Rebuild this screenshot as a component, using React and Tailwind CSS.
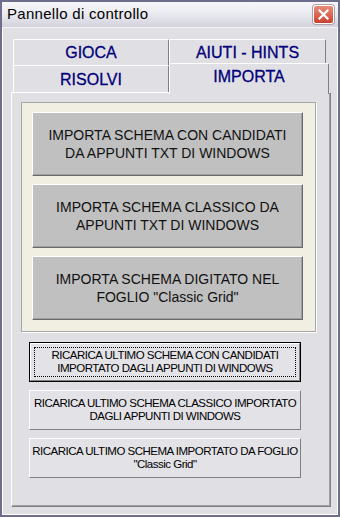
import React from 'react';

const bigButtons = [
  ['IMPORTA SCHEMA CON CANDIDATI', 'DA APPUNTI TXT DI WINDOWS'],
  ['IMPORTA SCHEMA CLASSICO DA', 'APPUNTI TXT DI WINDOWS'],
  ['IMPORTA SCHEMA DIGITATO NEL', 'FOGLIO "Classic Grid"'],
];

const smallButtons = [
  ['RICARICA ULTIMO SCHEMA CON CANDIDATI', 'IMPORTATO DAGLI APPUNTI DI WINDOWS'],
  ['RICARICA ULTIMO SCHEMA CLASSICO IMPORTATO', 'DAGLI APPUNTI DI WINDOWS'],
  ['RICARICA ULTIMO SCHEMA IMPORTATO DA FOGLIO', '"Classic Grid"'],
];

const font = { fontFamily: '"Liberation Sans", Arial, sans-serif' };

const Tab = ({ label, className = '' }) => (
  <div className={`flex items-center justify-center border-t border-l border-r border-t-white border-l-white border-r-[#808080] rounded-t-[2px] bg-[#e0dfe3] text-[16px] text-[#00007b] [-webkit-text-stroke:0.3px_#00007b] ${className}`}>
    {label}
  </div>
);

const CloseButton = () => (
  <div className="flex h-[19px] w-[21px] items-center justify-center rounded-[3px] border border-white bg-gradient-to-b from-[#e98b78] to-[#c8412f] shadow-[0_0_0_1px_#b0a0a8]">
    <svg width="11" height="11" viewBox="0 0 11 11">
      <path d="M1.5 1.5 L9.5 9.5 M9.5 1.5 L1.5 9.5" stroke="white" strokeWidth="2.2" strokeLinecap="square" />
    </svg>
  </div>
);

export default function App() {
  return (
    <div style={font} className="flex h-[517px] w-[340px] flex-col border-2 border-[#6e6d8c] bg-[#e0dfe3]">
      <div className="flex h-[26px] items-center justify-between border-b border-[#f4f4f6] bg-gradient-to-b from-[#f7f7fa] via-[#e9e9f0] to-[#d3d2dd] pl-[5px] pr-[4px]">
        <span className="text-[15px] tracking-[0.3px] text-black">Pannello di controllo</span>
        <CloseButton />
      </div>

      <div className="flex flex-1 flex-col border-l border-r border-b border-white pl-[8px] pt-[11px]">
        <div className="w-[320px]">
          <div className="flex pl-[2px]">
            <Tab label="GIOCA" className="h-[26px] w-[156px]" />
            <Tab label="AIUTI - HINTS" className="h-[26px] w-[157px]" />
          </div>
          <div className="flex pl-[2px]">
            <Tab label="RISOLVI" className="h-[27px] w-[156px] pt-[2px]" />
            <Tab label="IMPORTA" className="relative z-10 -mt-[2px] h-[31px] w-[160px] pb-[4px]" />
          </div>

          <div className="-mt-[2px] flex h-[415px] flex-col border-t border-l border-r border-b border-t-white border-l-white border-r-[#808080] border-b-[#808080] shadow-[inset_-1px_-1px_0_#a0a0a0] pl-[9px] pt-[9px]">
            <div className="flex h-[230px] w-[295px] flex-col gap-[8px] border border-[#a7a6aa] bg-[#f1efe2] pl-[10px] pt-[9px] shadow-[1px_1px_0_#ffffff]">
              {bigButtons.map((lines, i) => (
                <div key={i} className="flex h-[64px] w-[271px] flex-col items-center justify-center border-t border-l border-b border-r border-t-white border-l-white border-b-[#6a6a6a] border-r-[#6a6a6a] bg-[#c0c0c0] text-[14px] leading-[18px] text-[#111] shadow-[inset_-1px_-1px_0_#a0a0a0]">
                  {lines.map(l => <span key={l}>{l}</span>)}
                </div>
              ))}
            </div>

            <div className="mt-[10px] flex flex-col gap-[8px] pl-[8px]">
              {smallButtons.map((lines, i) => (
                <div key={i} className={`flex h-[40px] w-[272px] ${i === 0 ? 'border border-black' : ''}`}>
                  <div className="relative flex flex-1 flex-col items-center justify-center whitespace-nowrap border-t border-l border-b border-r border-t-white border-l-white border-b-[#808080] border-r-[#808080] bg-[#e3e2e7] text-[11.5px] leading-[13px] tracking-[-0.5px] text-black">
                    {i === 0 && <div className="absolute inset-[3px] border border-dotted border-black" />}
                    {lines.map(l => <span key={l}>{l}</span>)}
                  </div>
                </div>
              ))}
            </div>
          </div>
        </div>
      </div>
    </div>
  );
}
